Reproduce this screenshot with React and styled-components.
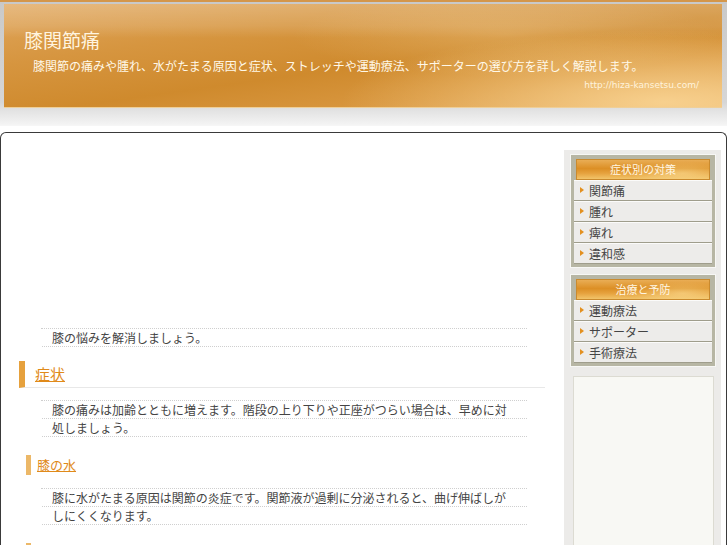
import React from "react";
import styled, {createGlobalStyle} from 'styled-components';

const GlobalStyle = createGlobalStyle`
  body {
    margin: 0;
    background: #ffffff;
    font-family: "Noto Sans CJK JP", "Noto Sans", sans-serif;
    color: #444;
  }
`

const HeaderWrap = styled.div`
  height: 126px;
  padding: 2px 5px 0 4px;
  box-sizing: border-box;
  border-top: 2px solid #d4964a;
  background: linear-gradient(to bottom, #c9c9c9 0px, #d6d6d6 100px, #e2e2e2 108px, #f3f3f3 122px, #fbfbfb 126px);
`

const Banner = styled.div`
  height: 104px;
  box-sizing: border-box;
  padding: 22px 23px 0 20px;
  border-bottom: 1px solid #efcf98;
  background:
    linear-gradient(to bottom, rgba(255,255,255,0.22) 0px, rgba(255,255,255,0.12) 22px, rgba(255,255,255,0) 34px),
    radial-gradient(ellipse 45% 70% at 92% 95%, rgba(255,222,160,0.75), rgba(255,222,160,0) 100%),
    radial-gradient(ellipse 30% 40% at 70% 30%, rgba(255,230,180,0.25), rgba(255,230,180,0) 100%),
    linear-gradient(172deg, #e0a65c 0%, #d6953f 30%, #cf8a2d 55%, #d8963e 75%, #e4ab5e 100%);
  color: #fff6e2;
`

const SiteTitle = styled.h1`
  margin: 0;
  font-size: 19px;
  font-weight: normal;
  line-height: 28px;
  color: #fff4df;
`

const SiteDesc = styled.p`
  margin: 4px 0 0 9px;
  font-size: 12px;
  line-height: 16px;
  white-space: nowrap;
  color: #fff8e8;
`

const SiteUrl = styled.div`
  margin-top: 5px;
  text-align: right;
  font-family: "DejaVu Sans", sans-serif;
  font-size: 9px;
  line-height: 12px;
  color: #fff3dc;
`

const ContentBox = styled.div`
  margin-top: 6px;
  border: 1px solid #3a3a3a;
  border-bottom: none;
  border-radius: 6px 6px 0 0;
  padding: 17px 5px 40px 0;
  display: flex;
  align-items: flex-start;
`

const Main = styled.div`
  width: 562px;
  flex-shrink: 0;
`

const AdSpace = styled.div`
  height: 178px;
`

const Ruled = styled.div`
  margin-left: ${props => props.$indent || 40}px;
  width: 486px;
  box-sizing: border-box;
  padding: 0 12px 0 11px;
  border-top: 1px dotted #cfcfcf;
  font-size: 12px;
  line-height: 18px;
  color: #444;
  background-image: conic-gradient(from 90deg at 1px 17px, #cfcfcf 25%, transparent 0);
  background-size: 2px 18px;
  margin-top: ${props => props.$top || 0}px;
`

const H2 = styled.h2`
  margin: 14px 0 0 18px;
  width: 526px;
  height: 27px;
  box-sizing: border-box;
  border-left: 6px solid #e6a13d;
  border-bottom: 1px solid #e8e8e8;
  padding-left: 10px;
  font-size: 15px;
  font-weight: normal;
  line-height: 26px;

  a {
    color: #e08a1a;
    text-decoration: underline;
  }
`

const H3 = styled.h3`
  margin: 18px 0 0 25px;
  height: 20px;
  border-left: 5px solid #ecb868;
  padding-left: 6px;
  font-size: 13px;
  font-weight: normal;
  line-height: 20px;

  a {
    color: #e08a1a;
    text-decoration: underline;
  }
`

const Sidebar = styled.div`
  width: 157px;
  margin-left: 1px;
  box-sizing: border-box;
  padding: 5px 6px 0 7px;
  background: #ecebe9;
  min-height: 420px;
`

const MenuFrame = styled.div`
  background: #b7b6a4;
  padding: 4px 3px 3px 3px;
  box-shadow: 0 0 0 1px #f7f7f5;
  margin-bottom: 8px;
`

const MenuHeader = styled.div`
  margin: 0 2px;
  height: 21px;
  box-sizing: border-box;
  border: 1px solid #c98a2e;
  background:
    radial-gradient(ellipse 40% 60% at 80% 70%, rgba(255,230,160,0.55), rgba(255,230,160,0) 100%),
    linear-gradient(to bottom, #e9ad55 0%, #dc8f25 45%, #e6a23e 70%, #f2c46a 100%);
  text-align: center;
  font-size: 11px;
  line-height: 19px;
  color: #fff7e4;
`

const MenuItem = styled.div`
  height: 21px;
  box-sizing: border-box;
  border-top: 1px solid #fbfbfa;
  border-bottom: 1px solid #9f9d8c;
  background: #edecea;
  padding-left: 15px;
  position: relative;
  font-size: 12px;
  line-height: 19px;
  color: #444;

  &::before {
    content: "";
    position: absolute;
    left: 6px;
    top: 6px;
    border-left: 4px solid #e3901f;
    border-top: 3px solid transparent;
    border-bottom: 3px solid transparent;
  }
`

const AdBox = styled.div`
  margin: 10px 1px 0 2px;
  height: 200px;
  background: #f8f8f4;
  border: 1px solid #dcdbd2;
`

const App = () => {
  return (
    <>
      <GlobalStyle/>
      <HeaderWrap>
        <Banner>
          <SiteTitle>膝関節痛</SiteTitle>
          <SiteDesc>膝関節の痛みや腫れ、水がたまる原因と症状、ストレッチや運動療法、サポーターの選び方を詳しく解説します。</SiteDesc>
          <SiteUrl>http://hiza-kansetsu.com/</SiteUrl>
        </Banner>
      </HeaderWrap>
      <ContentBox>
        <Main>
          <AdSpace/>
          <Ruled>膝の悩みを解消しましょう。</Ruled>
          <H2><a href="#">症状</a></H2>
          <Ruled $top={12}>膝の痛みは加齢とともに増えます。階段の上り下りや正座がつらい場合は、早めに対処しましょう。</Ruled>
          <H3><a href="#">膝の水</a></H3>
          <Ruled $top={13}>膝に水がたまる原因は関節の炎症です。関節液が過剰に分泌されると、曲げ伸ばしがしにくくなります。</Ruled>
          <H3><a href="#">原因</a></H3>
          <Ruled $top={13}>膝の痛みの多くは軟骨のすり減りによって起こります。</Ruled>
        </Main>
        <Sidebar>
          <MenuFrame>
            <MenuHeader>症状別の対策</MenuHeader>
            <MenuItem>関節痛</MenuItem>
            <MenuItem>腫れ</MenuItem>
            <MenuItem>痺れ</MenuItem>
            <MenuItem>違和感</MenuItem>
          </MenuFrame>
          <MenuFrame>
            <MenuHeader>治療と予防</MenuHeader>
            <MenuItem>運動療法</MenuItem>
            <MenuItem>サポーター</MenuItem>
            <MenuItem>手術療法</MenuItem>
          </MenuFrame>
          <AdBox/>
        </Sidebar>
      </ContentBox>
    </>
  )
}

export default App
